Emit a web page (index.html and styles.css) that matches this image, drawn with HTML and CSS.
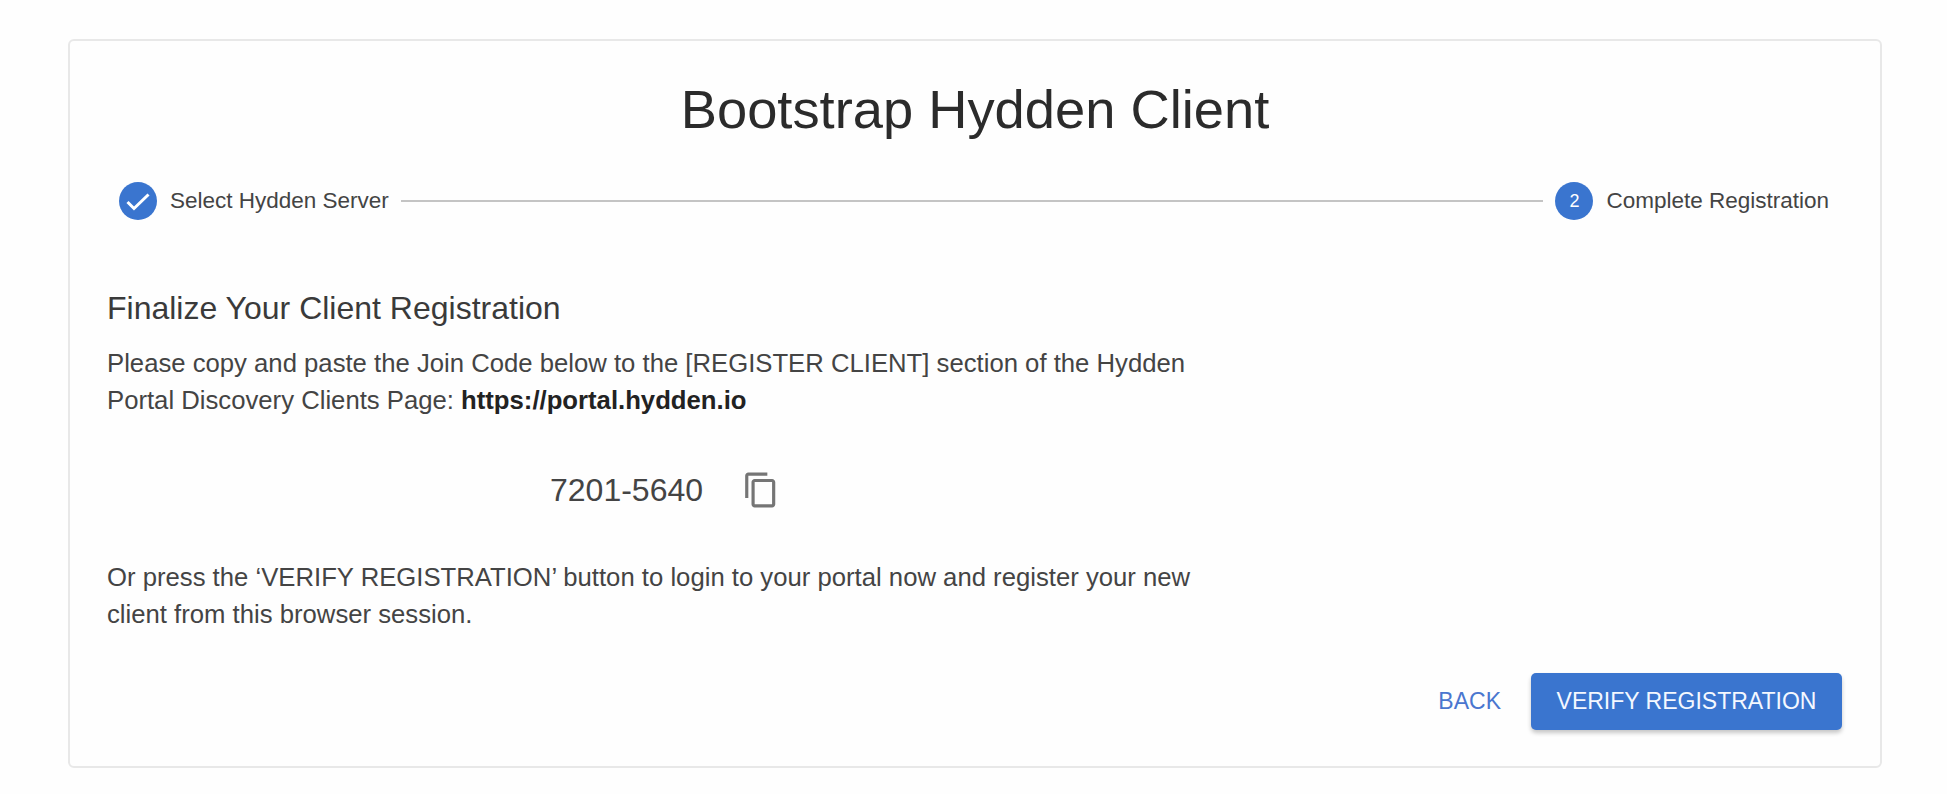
FILE: index.html
```html
<!DOCTYPE html>
<html lang="en">
<head>
<meta charset="utf-8">
<title>Bootstrap Hydden Client</title>
<link rel="stylesheet" href="styles.css">
</head>
<body>
<main class="card">
  <h1 class="title">Bootstrap Hydden Client</h1>
  <div class="stepper">
    <div class="step">
      <span class="step-icon">
        <svg viewBox="0 0 38 38" width="38" height="38"><path d="M8.500 20l6.500 6.500L29.500 12.500" fill="none" stroke="#fff" stroke-width="3"/></svg>
      </span>
      <span class="step-label">Select Hydden Server</span>
    </div>
    <div class="connector"></div>
    <div class="step">
      <span class="step-icon">2</span>
      <span class="step-label">Complete Registration</span>
    </div>
  </div>
  <section class="content">
    <h2 class="subtitle">Finalize Your Client Registration</h2>
    <p class="text">Please copy and paste the Join Code below to the [REGISTER CLIENT] section of the Hydden Portal Discovery Clients Page: <strong>https://portal.hydden.io</strong></p>
    <div class="code-row">
      <span class="code">7201-5640</span>
      <svg class="copy" viewBox="0 0 24 24" width="38" height="38"><path fill="#757575" d="M16 1H4c-1.100 0-2 .9-2 2v14h2V3h12V1zm3 4H8c-1.100 0-2 .9-2 2v14c0 1.100.9 2 2 2h11c1.100 0 2-.9 2-2V7c0-1.100-.9-2-2-2zm0 16H8V7h11v14z"/></svg>
    </div>
    <p class="text">Or press the ‘VERIFY REGISTRATION’ button to login to your portal now and register your new client from this browser session.</p>
  </section>
  <div class="actions">
    <button class="btn btn-text">BACK</button>
    <button class="btn btn-primary">VERIFY REGISTRATION</button>
  </div>
</main>
</body>
</html>
```

FILE: styles.css
```css
* { box-sizing: border-box; }
html, body { margin: 0; height: 100%; }
body {
  background: #fefefe;
  padding: 39px 65px 0 68px;
  font-family: "Liberation Sans", Arial, sans-serif;
  color: #333;
  overflow: hidden;
}
.card {
  width: 1814px;
  height: 729px;
  background: #fefefe;
  border: 2px solid #e8e8e8;
  border-radius: 6px;
  padding: 37px 38px 0;
}
.title {
  margin: 0;
  font-size: 54.300px;
  line-height: 64px;
  font-weight: 400;
  text-align: center;
  color: #2b2b2b;
}
.stepper {
  display: flex;
  align-items: center;
  gap: 12px;
  margin: 40px 0 0 11px;
  width: 1710px;
}
.step { display: flex; align-items: center; gap: 13px; }
.step-icon {
  width: 38px;
  height: 38px;
  border-radius: 50%;
  background: #3a75cf;
  color: #fff;
  display: flex;
  align-items: center;
  justify-content: center;
  font-size: 18px;
}
.step-label { font-size: 22.500px; color: #444; }
.connector { flex: 1; height: 2px; background: #c4c4c4; }
.content { width: 1116px; margin-top: 68px; margin-left: -1px; }
.subtitle {
  margin: 0;
  font-size: 32px;
  line-height: 40px;
  font-weight: 400;
  color: #3a3a3a;
}
.text {
  margin: 17px 0 0;
  font-size: 25.700px;
  line-height: 37px;
  color: #444;
}
.text strong { color: #222; }
.code-row {
  display: flex;
  align-items: center;
  justify-content: center;
  gap: 39px;
  margin: 47px 0 45px;
  height: 48px;
}
.code { font-size: 32px; color: #444; }
.actions {
  display: flex;
  justify-content: flex-end;
  align-items: center;
  gap: 30px;
  margin-top: 40px;
}
.btn {
  font-family: inherit;
  border: 0;
  border-radius: 5px;
  font-size: 23px;
  background: none;
  height: 57px;
}
.btn-text { color: #4a76cf; padding: 0; }
.btn-primary {
  width: 311px;
  background: #3a75cf;
  color: #f4f8ff;
  box-shadow: 0 3px 4px rgba(0, 0, 0, .22);
}
```
